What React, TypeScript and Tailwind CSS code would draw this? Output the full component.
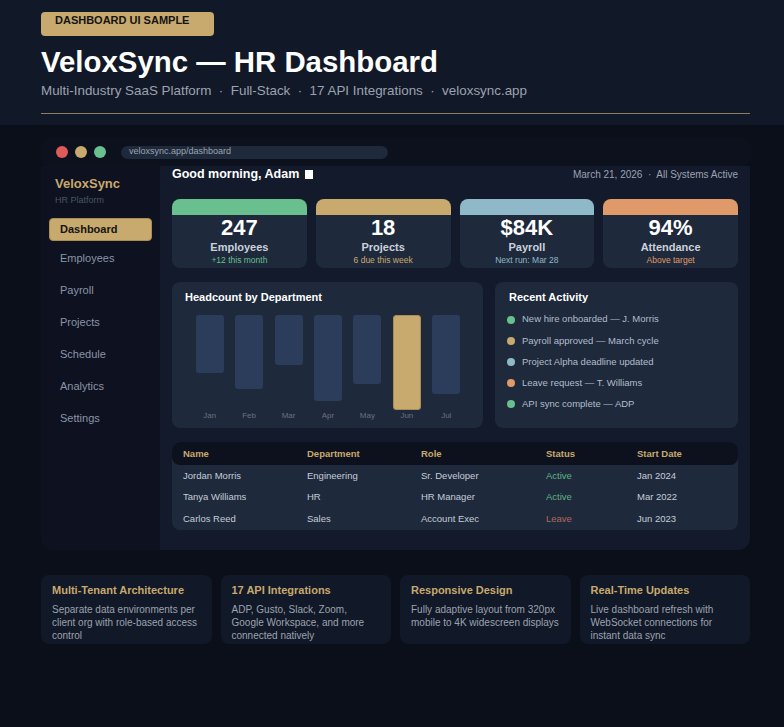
const STATS = [
  { value: "247", label: "Employees", sub: "+12 this month", band: "border-t-[#6abf8e]", subColor: "text-[#6abf8e]" },
  { value: "18", label: "Projects", sub: "6 due this week", band: "border-t-[#c8a96e]", subColor: "text-[#c8a96e]" },
  { value: "$84K", label: "Payroll", sub: "Next run: Mar 28", band: "border-t-[#8fb8c9]", subColor: "text-[#8fb8c9]" },
  { value: "94%", label: "Attendance", sub: "Above target", band: "border-t-[#e09a6a]", subColor: "text-[#e09a6a]" },
];

const NAV = ["Employees", "Payroll", "Projects", "Schedule", "Analytics", "Settings"];

const BARS = [
  { m: "Jan", h: 58 },
  { m: "Feb", h: 74 },
  { m: "Mar", h: 50 },
  { m: "Apr", h: 86 },
  { m: "May", h: 69 },
  { m: "Jun", h: 95, active: true },
  { m: "Jul", h: 79 },
];

const ACTIVITY = [
  { text: "New hire onboarded — J. Morris", dot: "bg-[#6abf8e]" },
  { text: "Payroll approved — March cycle", dot: "bg-[#c8a96e]" },
  { text: "Project Alpha deadline updated", dot: "bg-[#8fb8c9]" },
  { text: "Leave request — T. Williams", dot: "bg-[#e09a6a]" },
  { text: "API sync complete — ADP", dot: "bg-[#6abf8e]" },
];

const ROWS = [
  { name: "Jordan Morris", dept: "Engineering", role: "Sr. Developer", status: "Active", date: "Jan 2024" },
  { name: "Tanya Williams", dept: "HR", role: "HR Manager", status: "Active", date: "Mar 2022" },
  { name: "Carlos Reed", dept: "Sales", role: "Account Exec", status: "Leave", date: "Jun 2023" },
];

const FEATURES = [
  { title: "Multi-Tenant Architecture", body: "Separate data environments per client org with role-based access control" },
  { title: "17 API Integrations", body: "ADP, Gusto, Slack, Zoom, Google Workspace, and more connected natively" },
  { title: "Responsive Design", body: "Fully adaptive layout from 320px mobile to 4K widescreen displays" },
  { title: "Real-Time Updates", body: "Live dashboard refresh with WebSocket connections for instant data sync" },
];

const COLS = "grid grid-cols-[124px_114px_125px_91px_1fr]";

export default function App() {
  return (
    <div className="min-h-[727px] bg-[#0b0f1a] font-['Liberation_Sans',Arial,sans-serif]">
      <header className="h-[125px] bg-[#111827] pt-[12px]">
        <div className="ml-[41px] w-[709px]">
          <div className="h-[24px] w-[173px] rounded-[4px] bg-[#c8a96e] pl-[14px] pt-[1px] text-[11px] font-bold leading-[14px] text-[#141414]">
            DASHBOARD UI SAMPLE
          </div>
          <h1 className="mt-[9px] text-[29.4px] font-bold leading-[34px] text-white">
            VeloxSync — HR Dashboard
          </h1>
          <p className="mt-[3px] text-[13.4px] leading-[18px] text-[#9ca3af]">
            Multi-Industry SaaS Platform &nbsp;·&nbsp; Full-Stack &nbsp;·&nbsp; 17 API Integrations &nbsp;·&nbsp; veloxsync.app
          </p>
          <div className="mt-[13px] h-px bg-[#8c7b5c]" />
        </div>
      </header>

      <div className="ml-[41px] mt-[13px] w-[709px]">
        <div className="flex h-[28px] items-center rounded-lg bg-[#0c111d] pl-[15px]">
          <span className="h-[12px] w-[12px] rounded-full bg-[#e05a5a]" />
          <span className="ml-[7px] h-[12px] w-[12px] rounded-full bg-[#c8a96e]" />
          <span className="ml-[7px] h-[12px] w-[12px] rounded-full bg-[#6abf8e]" />
          <div className="ml-[15px] mt-[1px] h-[13px] w-[267px] rounded-full bg-[#1e293b] pl-[8px] text-[9px] leading-[10px] text-[#9ca3af]">
            veloxsync.app/dashboard
          </div>
        </div>

        <div className="flex h-[384px] overflow-hidden rounded-b-xl">
          <aside className="w-[119px] shrink-0 bg-[#0d1120]">
            <div className="pl-[14px] pt-[10px]">
              <p className="text-[13px] font-bold leading-[16px] text-[#c8a96e]">VeloxSync</p>
              <p className="mt-[2px] text-[9px] leading-[12px] text-[#4b5563]">HR Platform</p>
            </div>
            <nav className="mt-[12px] px-[8px]">
              <div className="flex h-[23px] items-center rounded-[4px] border border-[#a88d55] bg-[#c8a96e] pl-[10px] text-[11px] font-bold text-[#141414]">
                Dashboard
              </div>
              <div className="mt-[1px]">
                {NAV.map((item) => (
                  <div key={item} className="flex h-[32px] items-center pl-[11px] text-[11px] text-[#8b95a5]">
                    {item}
                  </div>
                ))}
              </div>
            </nav>
          </aside>

          <main className="flex-1 bg-[#131a2b] px-[12px]">
            <div className="flex h-[16px] items-center justify-between">
              <div className="flex items-center text-[12.5px] font-bold text-white">
                Good morning, Adam
                <span className="ml-[6px] h-[9px] w-[8px] bg-white" />
              </div>
              <div className="text-[10px] text-[#9ca3af]">March 21, 2026 &nbsp;·&nbsp; All Systems Active</div>
            </div>

            <div className="mt-[17px] grid grid-cols-4 gap-[9px]">
              {STATS.map((s) => (
                <div key={s.label} className={`h-[69px] rounded-lg border-t-[16px] bg-[#1e293b] text-center ${s.band}`}>
                  <div className="mt-[1px] text-[22px] font-bold leading-[24px] text-white">{s.value}</div>
                  <div className="text-[11px] font-bold leading-[14px] text-[#cbd2dc]">{s.label}</div>
                  <div className={`text-[8.5px] leading-[13px] ${s.subColor}`}>{s.sub}</div>
                </div>
              ))}
            </div>

            <div className="mt-[14px] grid h-[146px] grid-cols-[311px_1fr] gap-[12px]">
              <section className="rounded-lg bg-[#1e293b]">
                <h2 className="pl-[13px] pt-[8px] text-[11px] font-bold leading-[14px] text-white">Headcount by Department</h2>
                <div className="mt-[11px] grid grid-cols-7 pl-[18px] pr-[17px]">
                  {BARS.map((b) => (
                    <div key={b.m} className="flex flex-col items-center">
                      <div className="flex h-[95px] items-start">
                        <div
                          className={`w-[28px] rounded-[3px] ${b.active ? "border border-[#a88d55] bg-[#c8a96e]" : "bg-[#2c3d5b]"}`}
                          style={{ height: b.h }}
                        />
                      </div>
                      <div className="flex h-[12px] items-center text-[8px] text-[#6b7280]">{b.m}</div>
                    </div>
                  ))}
                </div>
              </section>

              <section className="rounded-lg bg-[#1e293b]">
                <h2 className="pl-[14px] pt-[8px] text-[11px] font-bold leading-[14px] text-white">Recent Activity</h2>
                <ul className="mt-[5px] pl-[12px]">
                  {ACTIVITY.map((a) => (
                    <li key={a.text} className="flex h-[21.2px] items-center text-[9.5px] text-[#b3bdcc]">
                      <span className={`h-[8px] w-[8px] rounded-full ${a.dot}`} />
                      <span className="ml-[7px]">{a.text}</span>
                    </li>
                  ))}
                </ul>
              </section>
            </div>

            <div className="mt-[14px] h-[88px] overflow-hidden rounded-lg bg-[#1e293b]">
              <div className={`${COLS} h-[23px] items-center rounded-lg bg-[#0c111d] pl-[11px] pt-[2px] text-[9.5px] font-bold text-[#c8a96e]`}>
                <span>Name</span>
                <span>Department</span>
                <span>Role</span>
                <span>Status</span>
                <span>Start Date</span>
              </div>
              <div>
                {ROWS.map((r) => (
                  <div key={r.name} className={`${COLS} h-[21.5px] items-center pl-[11px] text-[9.5px] text-[#c5cdd9]`}>
                    <span>{r.name}</span>
                    <span>{r.dept}</span>
                    <span>{r.role}</span>
                    <span className={r.status === "Active" ? "text-[#5fb584]" : "text-[#b06a5e]"}>{r.status}</span>
                    <span>{r.date}</span>
                  </div>
                ))}
              </div>
            </div>
          </main>
        </div>
      </div>

      <div className="ml-[41px] mt-[25px] grid w-[709px] grid-cols-4 gap-[9px]">
        {FEATURES.map((f) => (
          <div key={f.title} className="h-[69px] rounded-lg bg-[#111827] px-[11px] pt-[8px]">
            <h3 className="text-[11px] font-bold leading-[14px] text-[#c8a96e]">{f.title}</h3>
            <p className="mt-[6px] text-[10px] leading-[13px] text-[#9ca3af]">{f.body}</p>
          </div>
        ))}
      </div>
    </div>
  );
}
